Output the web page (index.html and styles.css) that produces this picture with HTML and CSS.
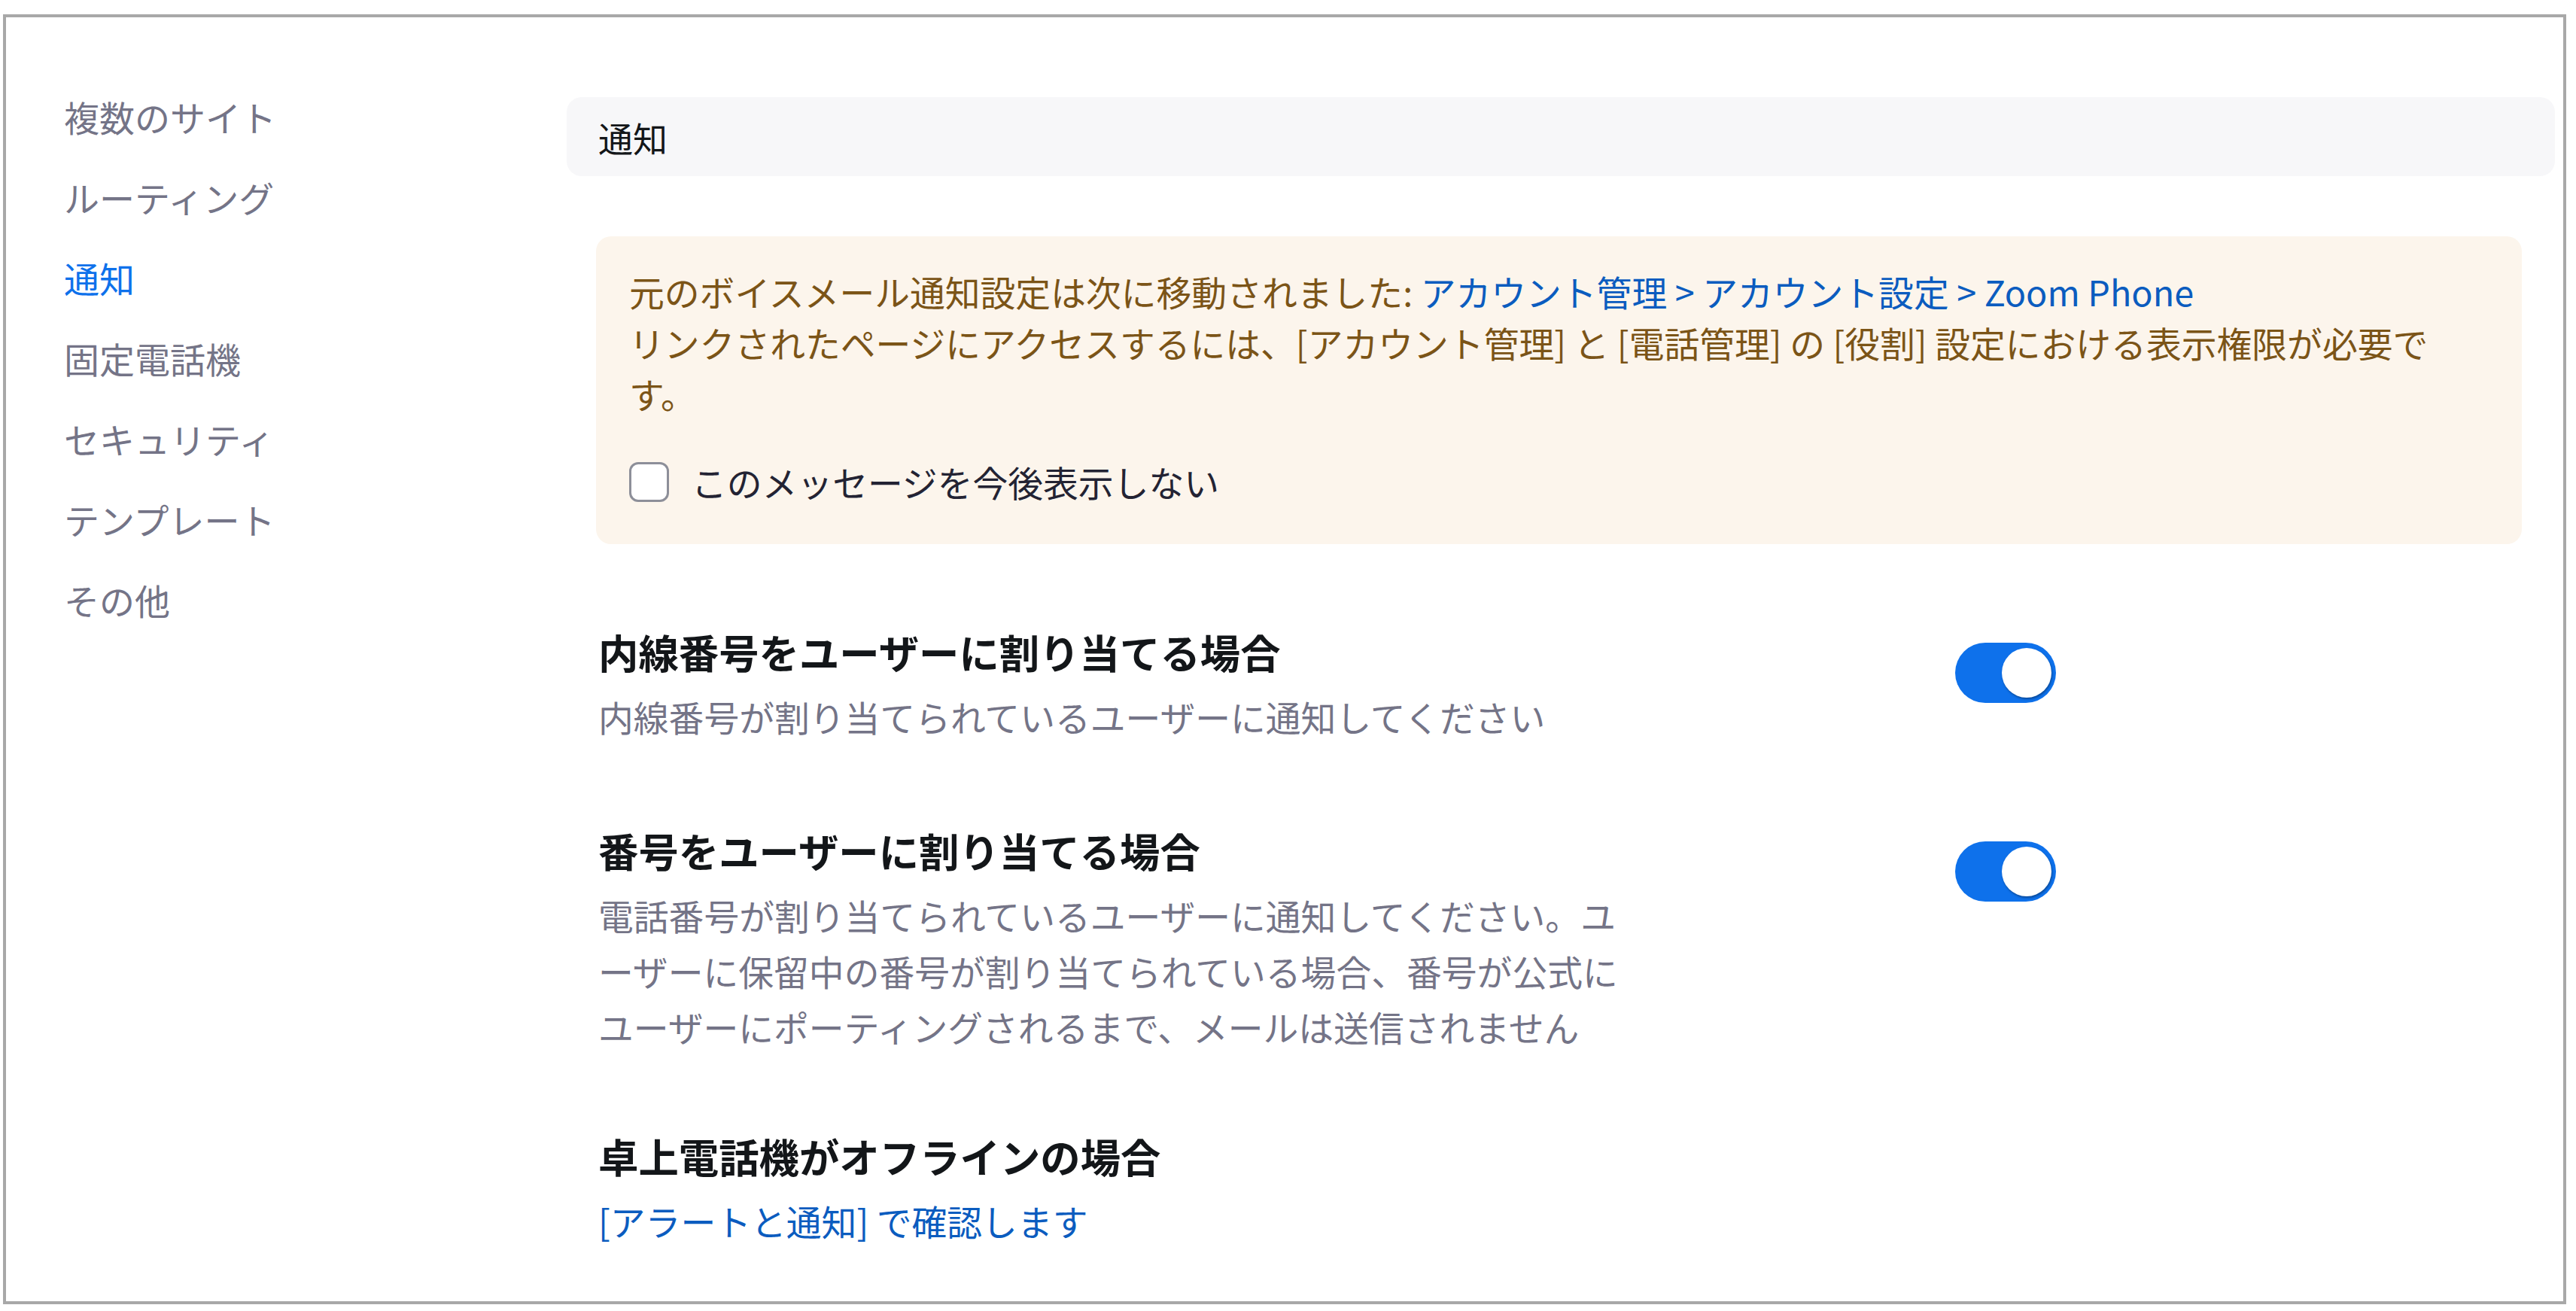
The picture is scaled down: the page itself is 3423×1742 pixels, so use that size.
FILE: index.html
```html
<!DOCTYPE html>
<html lang="ja">
<head>
<meta charset="UTF-8">
<title>通知 - 電話の設定</title>
<link rel="stylesheet" href="styles.css">
</head>
<body>
	<div class="frame">
		<ul class="side-nav">
			<li>複数のサイト</li>
			<li>ルーティング</li>
			<li class="active">通知</li>
			<li>固定電話機</li>
			<li>セキュリティ</li>
			<li>テンプレート</li>
			<li>その他</li>
		</ul>

		<div class="main">
			<div class="section-head">通知</div>

			<div class="section-body">
				<div class="notice">
					<p class="notice-text">元のボイスメール通知設定は次に移動されました: <a href="#">アカウント管理 &gt; アカウント設定 &gt; Zoom Phone</a><br>
					リンクされたページにアクセスするには、[アカウント管理] と [電話管理] の [役割] 設定における表示権限が必要です。</p>
					<label class="notice-check">
						<span class="checkbox"></span>
						このメッセージを今後表示しない
					</label>
				</div>

				<div class="setting">
					<div class="setting-text">
						<h3>内線番号をユーザーに割り当てる場合</h3>
						<p class="desc">内線番号が割り当てられているユーザーに通知してください</p>
					</div>
					<div class="toggle on"><span class="knob"></span></div>
				</div>

				<div class="setting">
					<div class="setting-text">
						<h3>番号をユーザーに割り当てる場合</h3>
						<p class="desc">電話番号が割り当てられているユーザーに通知してください。ユーザーに保留中の番号が割り当てられている場合、番号が公式にユーザーにポーティングされるまで、メールは送信されません</p>
					</div>
					<div class="toggle on"><span class="knob"></span></div>
				</div>

				<div class="setting">
					<div class="setting-text">
						<h3>卓上電話機がオフラインの場合</h3>
						<a class="desc-link" href="#">[アラートと通知] で確認します</a>
					</div>
				</div>
			</div>
		</div>
	</div>
</body>
</html>
```

FILE: styles.css
```css
body
{
	margin: 0;
	background: #ffffff;
	font-family: "Noto Sans CJK JP", "Noto Sans", sans-serif;
	color: #131619;
}

.frame
{
	display: flex;
	box-sizing: border-box;
	height: 1714px;
	margin: 19px 13px 0 4px;
	border: 4px solid #a8a8a8;
	overflow: hidden;
}

/* left menu */
.side-nav
{
	flex: 0 0 745px;
	list-style: none;
	margin: 0;
	padding: 78px 0 0 77px;
	box-sizing: border-box;
}

.side-nav li
{
	font-size: 47px;
	line-height: 107px;
	color: #747487;
}

.side-nav li.active
{
	color: #0e71eb;
}

/* right side */
.main
{
	flex: 1;
	padding: 106px 11px 0 0;
}

.section-head
{
	height: 105px;
	display: flex;
	align-items: center;
	padding-left: 42px;
	background: #f7f7f9;
	border-radius: 20px;
	font-size: 46px;
	color: #131619;
}

.section-body
{
	padding: 80px 44px 0 39px;
}

.notice
{
	background: #fcf5ec;
	border-radius: 20px;
	padding: 39px 44px 48px 44px;
}

.notice-text
{
	margin: 0;
	font-size: 46.8px;
	line-height: 68px;
	color: #7b5417;
	width: 2440px;
}

.notice-text a
{
	color: #0b5cbf;
	text-decoration: none;
}

.notice-check
{
	display: flex;
	align-items: center;
	gap: 30px;
	margin-top: 48px;
	font-size: 46.8px;
	line-height: 70px;
	color: #232333;
}

.checkbox
{
	width: 47px;
	height: 47px;
	border: 3px solid #8d8f99;
	border-radius: 12px;
	background: #ffffff;
}

.setting
{
	display: flex;
	align-items: flex-start;
	padding-left: 3px;
	margin-top: 104px;
}

.notice + .setting
{
	margin-top: 106px;
}

.setting:last-child
{
	margin-top: 98px;
}

.setting-text
{
	flex: 0 0 1803px;
}

.setting h3
{
	margin: 0 0 12px 0;
	font-size: 53.4px;
	font-weight: 700;
	line-height: 74px;
	color: #131619;
}

.desc
{
	margin: 0;
	width: 29.5em;
	font-size: 46.8px;
	line-height: 74px;
	color: #747487;
}

.desc-link
{
	display: block;
	font-size: 46.8px;
	line-height: 74px;
	color: #0b5cbf;
	text-decoration: none;
}

.toggle
{
	position: relative;
	flex: 0 0 134px;
	height: 80px;
	margin-top: 25px;
	border-radius: 40px;
	background: #0e71eb;
}

.toggle .knob
{
	position: absolute;
	top: 7px;
	right: 6px;
	width: 66px;
	height: 66px;
	border-radius: 50%;
	background: #ffffff;
	box-shadow: 1px 2px 3px rgba(0, 0, 0, 0.35);
}
```
